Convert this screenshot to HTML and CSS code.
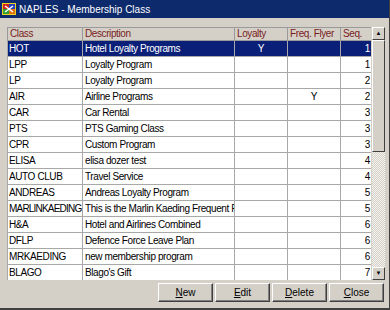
FILE: index.html
```html
<!DOCTYPE html>
<html lang="en">
<head>
    <meta charset="UTF-8">
    <title>NAPLES - Membership Class</title>
    <link rel="stylesheet" href="styles.css">
</head>
<body>
    <div class="window">
        <div class="titlebar">
            <svg class="app-icon" width="14" height="14" viewBox="0 0 14 14">
                <rect x="0" y="1" width="14" height="12" fill="#f0d020"/>
                <rect x="1" y="2" width="6" height="5" fill="#d02020"/>
                <rect x="7" y="2" width="6" height="5" fill="#2040c0"/>
                <rect x="1" y="7" width="6" height="5" fill="#30a030"/>
                <rect x="7" y="7" width="6" height="5" fill="#e07010"/>
                <path d="M3 4 L11 10 M11 4 L3 10" stroke="#fff" stroke-width="1.5"/>
            </svg>
            <span>NAPLES - Membership Class</span>
        </div>

        <div class="content">
            <div class="grid-area">
                <div class="grid-wrap">
                    <table class="grid">
                        <colgroup>
                            <col class="c-class">
                            <col class="c-desc">
                            <col class="c-loy">
                            <col class="c-freq">
                            <col class="c-seq">
                        </colgroup>
                        <thead>
                            <tr>
                                <th>Class</th>
                                <th>Description</th>
                                <th>Loyalty</th>
                                <th>Freq. Flyer</th>
                                <th>Seq.</th>
                            </tr>
                        </thead>
                        <tbody>
                            <tr class="selected"><td>HOT</td><td>Hotel Loyalty Programs</td><td class="mid">Y</td><td></td><td class="num">1</td></tr>
                            <tr><td>LPP</td><td>Loyalty Program</td><td></td><td></td><td class="num">1</td></tr>
                            <tr><td>LP</td><td>Loyalty Program</td><td></td><td></td><td class="num">2</td></tr>
                            <tr><td>AIR</td><td>Airline Programs</td><td></td><td class="mid">Y</td><td class="num">2</td></tr>
                            <tr><td>CAR</td><td>Car Rental</td><td></td><td></td><td class="num">3</td></tr>
                            <tr><td>PTS</td><td>PTS Gaming Class</td><td></td><td></td><td class="num">3</td></tr>
                            <tr><td>CPR</td><td>Custom Program</td><td></td><td></td><td class="num">3</td></tr>
                            <tr><td>ELISA</td><td>elisa dozer test</td><td></td><td></td><td class="num">4</td></tr>
                            <tr><td>AUTO CLUB</td><td>Travel Service</td><td></td><td></td><td class="num">4</td></tr>
                            <tr><td>ANDREAS</td><td>Andreas Loyalty Program</td><td></td><td></td><td class="num">5</td></tr>
                            <tr><td class="tight">MARLINKAEDING</td><td>This is the Marlin Kaeding Frequent Flyer Program</td><td></td><td></td><td class="num">5</td></tr>
                            <tr><td>H&amp;A</td><td>Hotel and Airlines Combined</td><td></td><td></td><td class="num">6</td></tr>
                            <tr><td>DFLP</td><td>Defence Force Leave Plan</td><td></td><td></td><td class="num">6</td></tr>
                            <tr><td>MRKAEDING</td><td>new membership program</td><td></td><td></td><td class="num">6</td></tr>
                            <tr><td>BLAGO</td><td>Blago's Gift</td><td></td><td></td><td class="num">7</td></tr>
                        </tbody>
                    </table>
                </div>
                <div class="scrollbar">
                    <div class="sb-btn">&#9650;</div>
                    <div class="sb-thumb"></div>
                    <div class="sb-track"></div>
                    <div class="sb-btn">&#9660;</div>
                </div>
            </div>

            <div class="buttons">
                <button><u>N</u>ew</button>
                <button><u>E</u>dit</button>
                <button><u>D</u>elete</button>
                <button><u>C</u>lose</button>
            </div>
        </div>
    </div>
</body>
</html>
```

FILE: styles.css
```css
body {
    margin: 0;
    font-family: "Liberation Sans", Arial, sans-serif;
    font-size: 10px;
    background-color: #d4d0c8;
}
.window {
    width: 390px;
    height: 310px;
    box-sizing: border-box;
    background-color: #d4d0c8;
    border-bottom: 2px solid #404040;
    border-right: 1px solid #404040;
    display: flex;
    flex-direction: column;
}
.titlebar {
    height: 18px;
    background-color: #0c2a6c;
    color: #fff;
    display: flex;
    align-items: center;
    gap: 3px;
    padding-left: 2px;
    font-size: 10px;
}
.app-icon {
    flex: none;
}
.content {
    padding: 9px 4px 0 7px;
}
.grid-area {
    display: flex;
    height: 253px;
}
.grid-wrap {
    width: 364px;
    background-color: #fff;
    overflow: hidden;
}
.grid {
    border-collapse: collapse;
    table-layout: fixed;
    width: 364px;
    letter-spacing: -0.4px;
}
.c-class { width: 75px; }
.c-desc { width: 152px; }
.c-loy { width: 53px; }
.c-freq { width: 53px; }
.c-seq { width: 31px; }
.grid th,
.grid td {
    border: 1px solid #8c8c8c;
    padding: 0 2px;
    white-space: nowrap;
    overflow: hidden;
    text-align: left;
    font-weight: normal;
}
.grid th {
    height: 12px;
    line-height: 12px;
    background-color: #d4d0c8;
    color: #7a1c1c;
    border-color: #9a9a9a;
}
.grid td {
    height: 15px;
    line-height: 15px;
    color: #000;
    border-color: #a8a8a8;
}
.grid td:first-child {
    padding-left: 1px;
    padding-right: 0;
}
.grid td.tight {
    letter-spacing: -0.8px;
}
.grid .mid {
    text-align: center;
}
.grid .num {
    text-align: right;
    padding-right: 1px;
}
.grid tr.selected td {
    background-color: #0a1f78;
    color: #fff;
}
.scrollbar {
    width: 13px;
    display: flex;
    flex-direction: column;
    margin-left: 1px;
}
.sb-btn {
    height: 11px;
    background-color: #d4d0c8;
    border: 1px solid;
    border-color: #fff #404040 #404040 #fff;
    font-size: 6px;
    line-height: 11px;
    text-align: center;
    color: #000;
}
.sb-thumb {
    height: 110px;
    background-color: #d4d0c8;
    border: 1px solid;
    border-color: #fff #404040 #404040 #fff;
}
.sb-track {
    flex: 1;
    background-color: #ecebe6;
    background-image: repeating-conic-gradient(#d4d0c8 0 25%, #f4f3ef 0 50%);
    background-size: 2px 2px;
}
.buttons {
    display: flex;
    justify-content: flex-end;
    gap: 2px;
    margin-top: 3px;
    padding-right: 1px;
}
button {
    width: 55px;
    height: 19px;
    background-color: #d4d0c8;
    border: 1px solid;
    border-color: #fff #404040 #404040 #fff;
    box-shadow: inset -1px -1px 0 #808080;
    font-family: "Liberation Sans", Arial, sans-serif;
    font-size: 10px;
    color: #000;
    padding: 0;
}
```
